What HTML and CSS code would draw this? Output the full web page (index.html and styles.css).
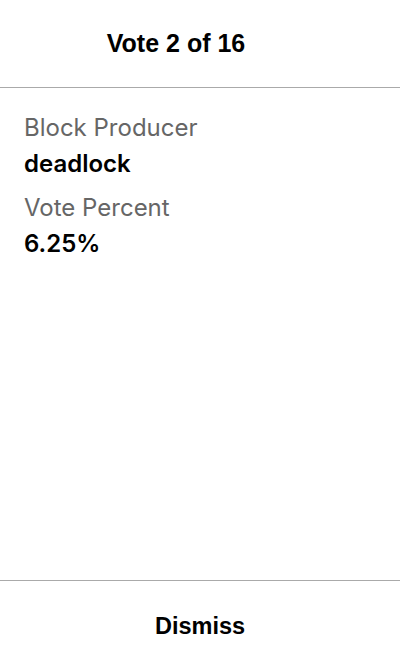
FILE: index.html
```html
<!DOCTYPE html>
<html>
<head>
<meta charset="utf-8">
<link rel="stylesheet" href="styles.css">
</head>
<body>
<div class="screen">
  <header class="header">
    <h1 class="title">Vote 2 of 16</h1>
  </header>
  <main class="content">
    <div class="field">
      <div class="label">Block Producer</div>
      <div class="value">deadlock</div>
    </div>
    <div class="field">
      <div class="label">Vote Percent</div>
      <div class="value">6.25%</div>
    </div>
  </main>
  <footer class="footer">
    <button class="dismiss">Dismiss</button>
  </footer>
</div>
</body>
</html>
```

FILE: styles.css
```css
html, body {
  margin: 0;
  padding: 0;
  background: #fff;
}
.screen {
  width: 400px;
  height: 672px;
  display: flex;
  flex-direction: column;
}
.header {
  height: 87px;
  border-bottom: 1px solid #aaaaaa;
  display: flex;
  align-items: center;
  justify-content: center;
  padding-right: 48px;
  box-sizing: content-box;
}
.title {
  margin: 0;
  font-family: "Liberation Sans", Arial, sans-serif;
  font-weight: bold;
  font-size: 25px;
  color: #000;
}
.content {
  flex: 1;
  padding: 22px 24px 0;
  display: flex;
  flex-direction: column;
  gap: 8px;
  font-family: Inter, sans-serif;
  font-size: 24px;
  line-height: 36px;
}
.label {
  color: #666666;
}
.value {
  color: #000;
  font-weight: 600;
}
.footer {
  height: 91px;
  border-top: 1px solid #aaaaaa;
  display: flex;
  align-items: center;
  justify-content: center;
}
.dismiss {
  border: none;
  background: none;
  padding: 0;
  font-family: "Liberation Sans", Arial, sans-serif;
  font-weight: bold;
  font-size: 23.5px;
  color: #000;
}
```
